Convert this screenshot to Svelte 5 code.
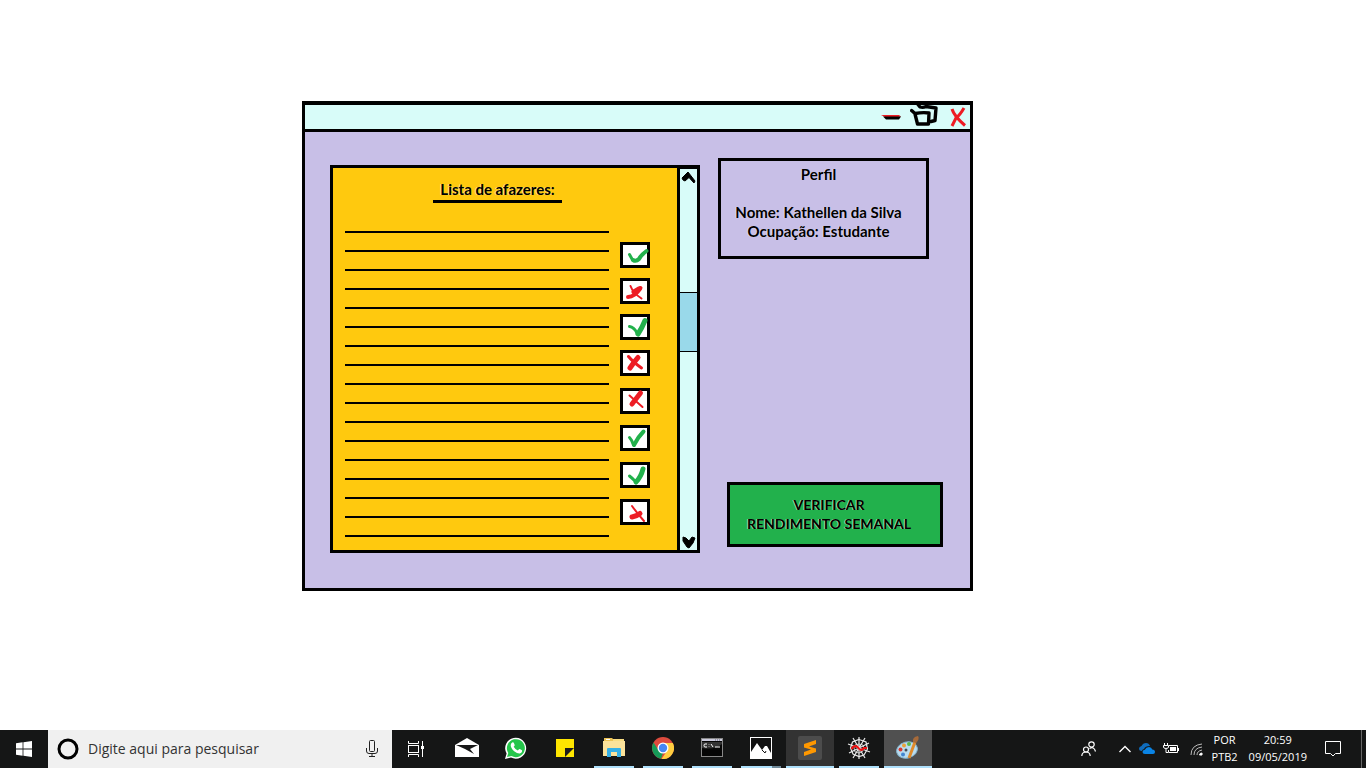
<script>
  let query = $state('');
  const lines = Array.from({ length: 17 }, (_, i) => i);

  let groups = $state([
    [
      { done: true, marks: [['M9.500 12.500 L12 17', 3], ['M13 18 Q16 20 19 17 Q21 13 26.500 9', 4]] },
      { done: false, marks: [['M8 19 Q15 19 20.500 10', 4], ['M14 14 L19 11', 5], ['M10.500 8 Q13 15 21.500 20.500', 2]] },
      { done: true, marks: [['M9.500 12.500 Q14 13 17 19', 3], ['M18 20 Q22 14 25 6.500', 5]] },
      { done: false, marks: [['M18 7.500 Q14 12 10 18', 5], ['M8.500 6.500 Q13 12 21.500 18', 3]] }
    ],
    [
      { done: false, marks: [['M20.500 5 L12 16', 5], ['M9.500 7.500 L22.500 19', 2]] },
      { done: true, marks: [['M9.500 12.500 Q12 15 13.500 20', 3], ['M14 20 Q18 12 23.500 6.500', 4]] },
      { done: true, marks: [['M9.500 14 Q12 16 15 19', 3], ['M16 20 Q21 15 23 7', 5]] },
      { done: false, marks: [['M12 18 Q17 17 20 14.500', 5], ['M12 7 Q17 14 24 22', 2]] }
    ]
  ]);

  const apps = [
    { id: 'mail', name: 'Email', state: '' },
    { id: 'whatsapp', name: 'WhatsApp', state: '' },
    { id: 'notes', name: 'Notas', state: '' },
    { id: 'files', name: 'Explorador de arquivos', state: 'open' },
    { id: 'chrome', name: 'Chrome', state: 'open' },
    { id: 'cmd', name: 'Prompt de comando', state: 'open' },
    { id: 'photos', name: 'Fotos', state: 'open many' },
    { id: 'sublime', name: 'Sublime Text', state: 'active' },
    { id: 'spider', name: 'Spyder', state: 'open' },
    { id: 'paint', name: 'Paint', state: 'active focused' }
  ];
</script>

<div class="screen">
  <main class="desktop">
    <section class="window" aria-label="Lista de afazeres">
      <header class="titlebar">
        <button aria-label="Minimizar">
          <svg width="20" height="8" viewBox="0 0 20 8"><path d="M0 2 H18 L20 3.5 L17 4 H4Z" fill="#ed1c24" /><path d="M2 3.500 L20 3.5 L18 6.500 H5Z" fill="#000" /></svg>
        </button>
        <button aria-label="Restaurar">
          <svg width="28" height="24" viewBox="0 0 28 24" fill="none" stroke="#000" stroke-width="3.4" stroke-linejoin="round" stroke-linecap="round">
            <path d="M8 1.500 L10 4 Q13 5 16 3.500 L26 5 L25 17.500 L21 18.500" />
            <path d="M1.600 7.500 L5 10.500 Q13 9 19 10 L18.500 21 H7.500 L5 11" />
          </svg>
        </button>
        <button aria-label="Fechar">
          <svg width="16" height="20" viewBox="0 0 16 20" fill="none" stroke="#ed1c24" stroke-width="3"><path d="M2 2 Q4 9 15 18.500" /><path d="M14 1 Q10 8 6 11 L2 19" /></svg>
        </button>
      </header>

      <div class="body">
        <section class="panel">
          <div class="list">
            <h2>Lista de afazeres:</h2>
            <div class="tasks">
              <ul class="lines">
                {#each lines as line (line)}<li></li>{/each}
              </ul>
              <div class="checks">
                {#each groups as group, g}
                  <div class="group">
                    {#each group as item, i}
                      <label class="check">
                        <input type="checkbox" bind:checked={item.done} aria-label="Tarefa {g * 4 + i + 1}" />
                        <svg width="30" height="26" viewBox="0 0 30 26" fill="none" stroke={item.done ? '#22b14c' : '#ed1c24'} stroke-linecap="round" stroke-linejoin="round">
                          {#each item.marks as mark}<path d={mark[0]} stroke-width={mark[1]} />{/each}
                        </svg>
                      </label>
                    {/each}
                  </div>
                {/each}
              </div>
            </div>
          </div>
          <div class="scroll">
            <button aria-label="Subir"><svg width="17" height="16" viewBox="0 0 17 16"><path d="M2 9 L8 3 L15 12 L14 14 L9 8.500 L5 12 L3 11 Z" fill="#000" stroke="#000" stroke-linejoin="round" /></svg></button>
            <div class="thumb"></div>
            <button aria-label="Descer"><svg width="17" height="16" viewBox="0 0 17 16"><path d="M3 3 L6 4 L9 7 L12 3 L15 4 L13 9 L9 14 L7 13 L3 7 Z" fill="#000" stroke="#000" stroke-linejoin="round" /></svg></button>
          </div>
        </section>

        <aside class="side">
          <section class="profile">
            <h2>Perfil</h2>
            <p>Nome: Kathellen da Silva</p>
            <p>Ocupação: Estudante</p>
          </section>
          <button class="verify">VERIFICAR<br />RENDIMENTO SEMANAL</button>
        </aside>
      </div>
    </section>
  </main>

  <footer class="taskbar">
    <button class="slot" aria-label="Iniciar">
      <svg width="16" height="16" viewBox="0 0 16 16" fill="#fff"><path d="M0 2.2 L6.6 1.3 V7.6 H0Z M7.4 1.2 L16 0 V7.6 H7.4Z M0 8.4 H6.6 V14.7 L0 13.8Z M7.4 8.4 H16 V16 L7.4 14.8Z" /></svg>
    </button>
    <div class="search">
      <svg width="24" height="24" viewBox="0 0 24 24" fill="none"><circle cx="12" cy="12" r="9" stroke="#000" stroke-width="3" /></svg>
      <input type="text" aria-label="Pesquisar" placeholder="Digite aqui para pesquisar" bind:value={query} />
      <svg width="12" height="18" viewBox="0 0 12 18" fill="none" stroke="#222"><rect x="3.5" y="0.5" width="5" height="11" rx="1" /><path d="M0.5 8 V11 Q0.5 13.5 3 13.5 H9 Q11.500 13.5 11.500 11 V8 M6 13.500 V16.500 M3 16.500 H9" /></svg>
    </div>
    <button class="slot view" aria-label="Visão de tarefas">
      <svg width="18" height="16" viewBox="0 0 18 16" fill="none" stroke="#fff"><path d="M1.500 0 V2.500 H11.500 V0 M1.500 16 V13.500 H11.500 V16 M15.500 0 V16" /><rect x="1.500" y="4.500" width="10" height="7" /><rect x="14" y="5" width="3" height="3" fill="#fff" stroke="none" /></svg>
    </button>
    <nav class="apps" aria-label="Aplicativos">
      {#each apps as app (app.id)}
        <button class="slot app {app.state}" aria-label={app.name}>
          {#if app.id === 'mail'}
            <svg width="24" height="20" viewBox="0 0 24 20"><path d="M0 7 L12 0 L24 7 V19 H0Z" fill="#fff" /><path d="M1 7 H23 L15 11 L19 16 L10 11Z" fill="#181818" /></svg>
          {:else if app.id === 'whatsapp'}
            <svg width="22" height="22" viewBox="0 0 22 22"><path d="M0 22 L1.600 16.500 A10.500 10.500 0 1 1 6 20.600Z" fill="#fff" /><path d="M2 20 L3.300 16 A9 9 0 1 1 6.500 19Z" fill="#25c64b" /><path d="M7.200 5.500 Q8.500 5 9 6.300 L9.700 8 Q9.900 8.700 8.700 9.800 Q10.200 12.500 12.800 13.500 L14 12.200 Q14.500 11.800 15.200 12.200 L17 13.200 Q17.500 15.800 14.800 16.500 Q12.500 16.800 9.200 14.300 Q5.600 11 5.700 8 Q5.900 6.300 7.200 5.500Z" fill="#fff" /></svg>
          {:else if app.id === 'notes'}
            <svg width="18" height="18" viewBox="0 0 18 18"><path d="M0 0 H18 V18 H0Z" fill="#ffe600" /><path d="M9 9 H18 L9 18Z" fill="#1c1c1c" /></svg>
          {:else if app.id === 'files'}
            <svg width="22" height="20" viewBox="0 0 22 20"><path d="M1 0 H9 L11 2 H21 V18 H1Z" fill="#edc355" /><path d="M10 1 H21 V5 H10Z" fill="#f8dd83" /><path d="M0 3 H22 V18 H0Z" fill="#fbe29a" /><path d="M3 1.500 H7" stroke="#fff" /><path d="M4 19 V11 Q4 10 5 10 H17 Q18 10 18 11 V19 H14 V14 H8 V19Z" fill="#36b0e6" /></svg>
          {:else if app.id === 'chrome'}
            <svg width="22" height="22" viewBox="0 0 22 22"><circle cx="11" cy="11" r="11" fill="#dd4b3e" /><path d="M1.500 5.500 L6.700 13.500 L11 16 L9 21.800 A11 11 0 0 1 1.500 5.500Z" fill="#159b58" /><path d="M11 6 H20.800 A11 11 0 0 1 9.500 21.900 L15.300 13.500Z" fill="#ffcd40" /><circle cx="11" cy="11" r="5.500" fill="#fff" /><circle cx="11" cy="11" r="4.200" fill="#4587f3" /></svg>
          {:else if app.id === 'cmd'}
            <svg width="22" height="20" viewBox="0 0 22 20"><rect x=".5" y=".5" width="21" height="18" fill="#050505" stroke="#888" /><path d="M1 1 H21 V3 H1Z" fill="#ccd" /><path d="M14 2 H20" stroke="#667" stroke-dasharray="1 1" /><path d="M1 10 Q14 12 21 6 V4 H1Z" fill="#333" /><path d="M6 6 H4 Q3 6 3 7.500 Q3 9 4 9 H6 M8 6.500 V7 M8 8.500 V9 M10 6 L12 9 M14 9 H19" fill="none" stroke="#fff" /></svg>
          {:else if app.id === 'photos'}
            <svg width="22" height="22" viewBox="0 0 22 22"><rect x=".5" y=".5" width="21" height="21" fill="#111" stroke="#fff" /><path d="M1 15 L7 6 L12 13 L15 9 H17 L21 16 V21 H1Z" fill="#fff" /><path d="M12 13 L15 16 L16 14" fill="none" stroke="#111" /></svg>
          {:else if app.id === 'sublime'}
            <svg width="24" height="24" viewBox="0 0 24 24"><rect width="24" height="24" rx="2" fill="#4c4c4c" /><path d="M6 8 L18 4 V8 L11 10.500 L18 12.500 V16 L6 20 V16 L13 13.500 L6 11.500Z" fill="#ff9800" /></svg>
          {:else if app.id === 'spider'}
            <svg width="24" height="24" viewBox="0 0 24 24" fill="none" stroke="#e8e8e8"><path d="M12 1 V23 M1 8 L23 16 M2 17 L22 7 M6 2 L18 22 M18 2 L6 22" stroke-width="1.200" /><path d="M12 3.500 L19 6 L20.500 13 L17 19 L12 20.500 L6 18 L3.500 12 L5.500 6Z" stroke-width="1.200" /><path d="M12 8 L16 9 L17 12 L15 16 L12 17 L8 16 L7 12 L8 9Z" stroke-width=".8" /><path d="M4.500 13 Q8 8 11 11.500 Q14 16 17 12 L20 12" stroke="#e11" stroke-width="2.200" /></svg>
          {:else}
            <svg width="24" height="24" viewBox="0 0 24 24"><ellipse cx="11" cy="14" rx="10.500" ry="8" transform="rotate(-15 11 14)" fill="#b9dcef" stroke="#84b3cc" /><circle cx="4.500" cy="13.500" r="2" fill="#d73931" /><circle cx="8" cy="9.500" r="2" fill="#e9a13a" /><circle cx="13" cy="8" r="2" fill="#5db64b" /><circle cx="10" cy="14" r="1.500" fill="#444c55" /><circle cx="7" cy="18.500" r="2" fill="#4386d0" /><path d="M13 22 L19 6" stroke="#df8b2b" stroke-width="3" /><path d="M17 6 Q16 1 22 0 Q24 3 20 7Z" fill="#a66a3a" /></svg>
          {/if}
        </button>
      {/each}
    </nav>
    <div class="tray">
      <button class="people" aria-label="Pessoas">
        <svg width="16" height="16" viewBox="0 0 16 16" fill="none" stroke="#fff" stroke-width="1.200"><circle cx="10.500" cy="3.500" r="2.700" /><circle cx="5" cy="8.500" r="2.500" /><path d="M.8 15 Q1 11 5 11 Q9 11 9.200 15 M8.500 7.500 Q13 5 14.500 10.500" /></svg>
      </button>
      <button aria-label="Mostrar ícones ocultos"><svg width="12" height="8" viewBox="0 0 12 8" fill="none" stroke="#fff" stroke-width="1.400"><path d="M.5 7 L6 1.500 L11.500 7" /></svg></button>
      <button aria-label="OneDrive"><svg width="16" height="12" viewBox="0 0 16 12"><path d="M3 8 Q0 8 0 5.500 Q0 3.500 2.500 3 Q4 0 7 0 Q10 0 11 3 Q6 3 5 6 Q3 6.500 3 8Z" fill="#0f6cbd" /><path d="M6 11 Q3.500 11 3.500 9 Q3.500 7 5.800 6.800 Q7 4 10 4 Q12.500 4 13.300 6.500 Q16 6.600 16 9 Q16 11 14 11Z" fill="#0a84e5" /></svg></button>
      <button aria-label="Bateria"><svg width="16" height="12" viewBox="0 0 16 12" fill="none" stroke="#fff"><path d="M1.500 0 V2 M4.500 0 V2 M.5 2.500 H5.500 V4 Q5.500 5.500 3 5.500 Q.5 5.500 .5 4Z M3 6 V9.500 H5 M6 2.500 H14.500 V9.500 H5.500 V7" /><path d="M7 4 H13 V8 H7Z M14 5 H16 V8 H14Z" fill="#fff" stroke="none" /></svg></button>
      <button class="net" aria-label="Rede"><svg width="14" height="14" viewBox="0 0 14 14" fill="none" stroke="#bbb"><path d="M1 13 Q1 3 12 2 M4 13 Q4 6 12 5 M7 13 Q7 9 12 8" /><path d="M9.500 13 Q9.500 11 12 11 V13Z" fill="#fff" stroke="#fff" /></svg></button>
      <button class="text">POR<br />PTB2</button>
      <button class="text clock">20:59<br />09/05/2019</button>
      <button class="notice" aria-label="Notificações"><svg width="16" height="16" viewBox="0 0 16 16" fill="none" stroke="#fff"><path d="M.5 .5 H15.500 V12.500 H10.500 L8 15 L5.500 12.500 H.5Z" /></svg></button>
      <button class="show" aria-label="Mostrar área de trabalho"></button>
    </div>
  </footer>
</div>

<style>
  :global(body) { margin: 0; background: #fff; }
  * { box-sizing: border-box; }
  button { border: 0; padding: 0; margin: 0; background: none; font: inherit; color: inherit; cursor: pointer; }
  svg { display: block; flex: none; }
  h2, p, ul { margin: 0; padding: 0; font-size: inherit; list-style: none; }

  .screen { min-height: 100vh; display: flex; flex-direction: column; }
  .desktop {
    flex: 1;
    padding: 101px 393px 24px 302px;
    font: bold 15px/19px Lato, Calibri, sans-serif;
    color: #000;
  }
  .window { border: 3px solid #000; border-top-width: 4px; background: #c8bfe7; }
  .titlebar {
    height: 27px;
    padding: 0 4px;
    display: flex;
    align-items: center;
    justify-content: flex-end;
    gap: 9px;
    background: #d8fcf9;
    border-bottom: 3px solid #000;
  }
  .titlebar button:nth-child(2) { align-self: flex-start; margin-top: -2px; }
  .titlebar button:last-child { margin-left: 3px; }
  .body {
    display: grid;
    grid-template-columns: minmax(0, 370fr) minmax(0, 225fr);
    gap: 18px;
    padding: 26px 27px 35px 25px;
  }
  .panel { margin-top: 7px; display: flex; border: 3px solid #000; background: #ffc90e; }
  .list { flex: 1; padding: 12px 27px 13px 12px; display: flex; flex-direction: column; align-items: center; }
  .list h2 {
    padding: 0 7px 1px;
    line-height: 19px;
    border-bottom: 3px solid #000;
    margin-bottom: 11px;
    text-shadow: -1px 0 rgba(255, 255, 255, 0.5);
  }
  .tasks { align-self: stretch; display: flex; gap: 11px; }
  .lines { flex: 1; }
  .lines li { height: 19px; border-bottom: 2px solid #000; }
  .checks { padding-top: 28px; display: grid; align-content: start; gap: 12px; }
  .group { display: grid; gap: 10px; }
  .group + .group { gap: 11px; }
  .check { display: grid; }
  .check input, .check svg { grid-area: 1 / 1; }
  .check input { appearance: none; width: 30px; height: 26px; margin: 0; border: 3px solid #000; background: #fff; }
  .check svg { pointer-events: none; z-index: 1; }
  .scroll {
    width: 20px;
    display: flex;
    flex-direction: column;
    background: #d8fcf9;
    border-left: 3px solid #000;
    border-top: 1px solid #000;
  }
  .thumb { height: 60px; margin: 107px 0 auto; background: #99d9ea; border: solid #000; border-width: 1px 0; }

  .side { display: flex; flex-direction: column; justify-content: space-between; padding-bottom: 6px; text-align: center; }
  .profile { margin-right: 14px; padding: 4px 10px 15px 0; border: 3px solid #000; text-shadow: -1px 0 rgba(255, 255, 255, 0.4); white-space: nowrap; }
  .profile h2 { margin-bottom: 19px; }
  .verify {
    margin-left: 9px;
    padding: 10px 12px 11px 0;
    border: 3px solid #000;
    background: #22b14c;
    font-size: 14px;
    text-shadow: -1px 0 rgba(255, 255, 255, 0.6);
    white-space: nowrap;
  }

  .taskbar { height: 38px; display: flex; background: #151616; color: #fff; font: 11px/17px "Open Sans", "Segoe UI", sans-serif; }
  .slot { width: 48px; height: 38px; display: flex; align-items: center; justify-content: center; flex: none; }
  .search { width: 344px; display: flex; align-items: center; padding: 0 14px 0 8px; background: #f0f0f0; }
  .search input {
    flex: 1;
    min-width: 0;
    padding: 0 8px;
    border: 0;
    outline: 0;
    background: none;
    font: 14px/20px "Open Sans", "Segoe UI", sans-serif;
    color: #333;
  }
  .search input::placeholder { color: #333; opacity: 1; }
  .view { margin-right: 3px; }
  .apps { display: flex; gap: 1px; }
  .app { background: linear-gradient(#aee0fb, #aee0fb) center bottom / 0 2px no-repeat; padding-bottom: 2px; }
  .app.open { background-size: 40px 2px; }
  .app.many { background-image: linear-gradient(90deg, #aee0fb 31px, #708a99 31px); }
  .app.active { background-color: #333; background-size: 48px 2px; }
  .app.focused { background-color: #505050; }
  .tray { margin-left: auto; display: flex; align-items: center; gap: 8px; }
  .people { margin-right: 14px; }
  .net { margin-left: 3px; }
  .tray .text { line-height: 17px; text-align: center; padding-bottom: 2px; }
  .tray .clock { margin-left: 3px; }
  .notice { margin: 0 12px 0 10px; }
  .show { width: 5px; height: 38px; border-left: 1px solid #666; }
</style>
